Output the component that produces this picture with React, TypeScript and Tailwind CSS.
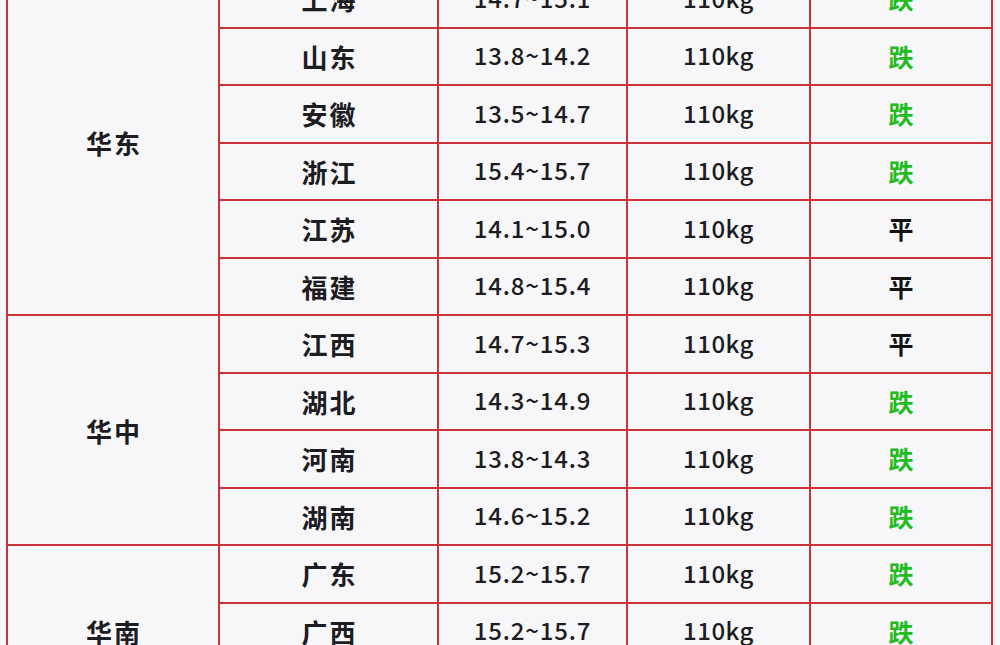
const rows: { region?: string; span?: number; name: string; price: string; trend: string }[] = [
  { region: '华东', span: 6, name: '上海', price: '14.7~15.1', trend: '跌' },
  { name: '山东', price: '13.8~14.2', trend: '跌' },
  { name: '安徽', price: '13.5~14.7', trend: '跌' },
  { name: '浙江', price: '15.4~15.7', trend: '跌' },
  { name: '江苏', price: '14.1~15.0', trend: '平' },
  { name: '福建', price: '14.8~15.4', trend: '平' },
  { region: '华中', span: 4, name: '江西', price: '14.7~15.3', trend: '平' },
  { name: '湖北', price: '14.3~14.9', trend: '跌' },
  { name: '河南', price: '13.8~14.3', trend: '跌' },
  { name: '湖南', price: '14.6~15.2', trend: '跌' },
  { region: '华南', span: 3, name: '广东', price: '15.2~15.7', trend: '跌' },
  { name: '广西', price: '15.2~15.7', trend: '跌' },
  { name: '海南', price: '15.4~15.8', trend: '跌' },
];

const cell = 'border-2 border-[#c9343b] text-center align-middle';

export default function App() {
  return (
    <div className="h-[645px] w-[1000px] overflow-hidden bg-[#f7f7f9] font-['Noto_Sans_CJK_SC',sans-serif] text-[#1c1c22]">
      <table className="ml-[6px] mt-[-31px] w-[985px] table-fixed border-collapse">
        <colgroup>
          <col className="w-[212px]" />
          <col className="w-[219px]" />
          <col className="w-[189px]" />
          <col className="w-[183px]" />
          <col className="w-[182px]" />
        </colgroup>
        <tbody>
          {rows.map((r) => (
            <tr key={r.name} className="h-[57.5px]">
              {r.region && (
                <td rowSpan={r.span} className={`${cell} pl-[2px] text-[26px] font-bold tracking-[2px]`}>
                  {r.region}
                </td>
              )}
              <td className={`${cell} pl-[2px] text-[26px] font-bold tracking-[2px]`}>{r.name}</td>
              <td className={`${cell} pb-[2px] text-[24px] font-medium tracking-[0.8px]`}>{r.price}</td>
              <td className={`${cell} pb-[2px] text-[24px] font-medium tracking-[0.5px]`}>110kg</td>
              <td
                className={`${cell} text-[25px] font-bold ${r.trend === '跌' ? 'text-[#22bb22]' : 'text-[#141414]'}`}
              >
                {r.trend}
              </td>
            </tr>
          ))}
        </tbody>
      </table>
    </div>
  );
}
